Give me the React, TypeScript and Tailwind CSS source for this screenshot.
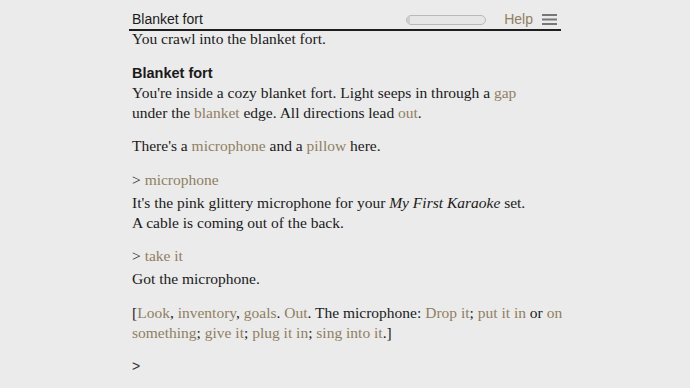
import React from 'react';

// link-coloured word
const L: React.FC<{ children: React.ReactNode }> = ({ children }) => (
  <span className="text-[#8f7f62]">{children}</span>
);

const Header: React.FC = () => (
  <div className="flex items-end pt-[10px] border-b-2 border-[#1e1e1e] font-['Liberation_Sans',sans-serif] text-[14px] leading-[19px] text-[#1a1a1a]">
    <div className="flex-1 pl-[3px]">Blanket fort</div>
    <div className="flex items-center h-[19px] mr-[18px]">
      <div className="w-[80px] h-[10px] rounded-full border border-[#b9b9b9] bg-[#e6e6e6] flex">
        <div className="w-[3px] h-full rounded-l-full bg-[#cfcfcf]" />
      </div>
    </div>
    <div className="text-[#8f7f62] mr-[9px]">Help</div>
    <div className="flex items-center h-[19px] mr-[4px]">
      <svg width="15" height="11" viewBox="0 0 15 11">
        <rect x="0" y="0" width="15" height="2" fill="#777" />
        <rect x="0" y="4.5" width="15" height="2" fill="#777" />
        <rect x="0" y="9" width="15" height="2" fill="#777" />
      </svg>
    </div>
  </div>
);

export default function App() {
  return (
    <div className="min-h-screen w-full bg-[#ebebeb]">
      <div className="mx-auto w-[432px]">
        <Header />
        <div className="-mt-[2px] pl-[3px] w-[460px] whitespace-nowrap font-['Liberation_Serif',serif] text-[15.5px] leading-[20px] text-[#1a1a1a] flex flex-col gap-[13px]">
          <p className="mb-px">You crawl into the blanket fort.</p>
          <div>
            <h2 className="font-['Liberation_Sans',sans-serif] font-bold text-[14.5px]">Blanket fort</h2>
            <p>
              You're inside a cozy blanket fort. Light seeps in through a <L>gap</L>
              <br />
              under the <L>blanket</L> edge. All directions lead <L>out</L>.
            </p>
          </div>
          <p>
            There's a <L>microphone</L> and a <L>pillow</L> here.
          </p>
          <p className="mt-px">
            &gt; <L>microphone</L>
          </p>
          <p className="-mt-[10px]">
            It's the pink glittery microphone for your <i>My First Karaoke</i> set.
            <br />
            A cable is coming out of the back.
          </p>
          <p>
            &gt; <L>take it</L>
          </p>
          <p className="-mt-[10px]">Got the microphone.</p>
          <p className="mt-px">
            [<L>Look</L>, <L>inventory</L>, <L>goals</L>. <L>Out</L>. The microphone: <L>Drop it</L>; <L>put it in</L> or <L>on</L>
            <br />
            <L>something</L>; <L>give it</L>; <L>plug it in</L>; <L>sing into it</L>.]
          </p>
          <p className="font-['Liberation_Sans',sans-serif] text-[14px] text-[#333]">&gt;</p>
        </div>
      </div>
    </div>
  );
}
